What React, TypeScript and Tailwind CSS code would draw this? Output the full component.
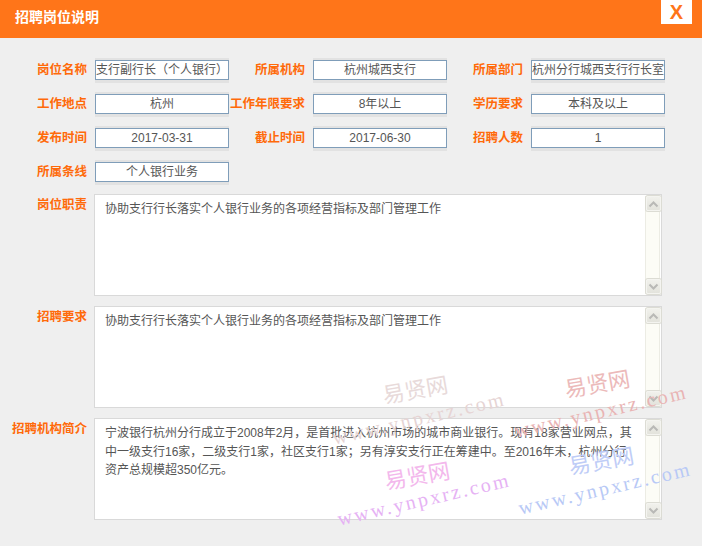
import React from 'react';

const FONT = { fontFamily: '"Liberation Sans", "Noto Sans CJK SC", sans-serif' };

const rows: [string, string][][] = [
  [
    ['岗位名称', '支行副行长（个人银行）'],
    ['所属机构', '杭州城西支行'],
    ['所属部门', '杭州分行城西支行行长室'],
  ],
  [
    ['工作地点', '杭州'],
    ['工作年限要求', '8年以上'],
    ['学历要求', '本科及以上'],
  ],
  [
    ['发布时间', '2017-03-31'],
    ['截止时间', '2017-06-30'],
    ['招聘人数', '1'],
  ],
  [['所属条线', '个人银行业务']],
];

// 水印位置（中心点）
const marks = [
  { x: 415, y: 388, cx: 419, cy: 418, c1: '#e8dada', c2: '#e6d4d4' },
  { x: 597, y: 382, cx: 601, cy: 411, c1: '#ecbaba', c2: '#e9b4b4' },
  { x: 417, y: 474, cx: 424, cy: 499, c1: '#f3b8ec', c2: '#e6b2f4' },
  { x: 601, y: 459, cx: 605, cy: 488, c1: '#bfcdf7', c2: '#b8c9f6' },
];

const Chevron = ({ up }: { up?: boolean }) => (
  <svg width="11" height="8" viewBox="0 0 11 8">
    <polyline
      points={up ? '1.5,6.5 5.5,2.5 9.5,6.5' : '1.5,1.5 5.5,5.5 9.5,1.5'}
      fill="none"
      stroke="#b9b9b6"
      strokeWidth="2"
    />
  </svg>
);

const ScrollBtn = ({ up }: { up?: boolean }) => (
  <div className="w-[15px] h-[15px] rounded-[2px] border border-[#f4f4f0] bg-gradient-to-b from-[#f1f1ec] to-[#e3e3dc] flex items-center justify-center shadow-[0_0_0_1px_#dcdcd4]">
    <Chevron up={up} />
  </div>
);

const TextBox = ({ label, children }: { label: string; children: React.ReactNode }) => (
  <div className="flex">
    <div className="w-[87px] pt-[3px] text-right text-[12.5px] leading-[16px] font-bold text-[#ff6a0a] whitespace-nowrap">
      {label}
    </div>
    <div className="ml-[7px] w-[568px] h-[102px] bg-white border border-[#d9d9d9] flex">
      <div className="flex-1 pl-[10px] pt-[5px] text-[12px] leading-[18.5px] text-[#555]">{children}</div>
      <div className="w-[15px] my-[1px] mr-[1px] bg-[#fcfcf6] border-x border-[#ecece4] flex flex-col justify-between">
        <ScrollBtn up />
        <ScrollBtn />
      </div>
    </div>
  </div>
);

export default function App() {
  return (
    <div className="relative w-full min-h-[546px] bg-[#efefef] overflow-hidden" style={FONT}>
      {/* 标题栏 */}
      <div className="h-[38px] bg-[#ff7519] flex items-start justify-between">
        <div className="pl-[15px] pt-[8px] text-[14px] leading-[18px] font-bold text-white">招聘岗位说明</div>
        <div className="mr-[10px] w-[31px] h-[24px] bg-white flex items-center justify-center text-[20px] font-bold text-[#ff7519] leading-none">
          X
        </div>
      </div>

      {/* 基本信息 */}
      <div className="pt-[22px] pl-[11px] flex flex-col gap-[14px]">
        {rows.map((row, i) => (
          <div key={i} className="flex">
            {row.map(([label, value]) => (
              <div key={label} className="flex items-center gap-[8px]">
                <div className="w-[76px] text-right text-[12.5px] font-bold text-[#ff6a0a] whitespace-nowrap flex justify-end">
                  {label}
                </div>
                <div className="w-[134px] h-[20px] bg-white border border-[#7f9db9] shadow-[0_-2px_0_#e2e2e2,0_3px_0_#e2e2e2] text-[12px] leading-[18px] text-[#555] text-center whitespace-nowrap overflow-hidden">
                  {value}
                </div>
              </div>
            ))}
          </div>
        ))}
      </div>

      {/* 文本区域 */}
      <div className="mt-[12px] flex flex-col gap-[10px]">
        <TextBox label="岗位职责">协助支行行长落实个人银行业务的各项经营指标及部门管理工作</TextBox>
        <TextBox label="招聘要求">协助支行行长落实个人银行业务的各项经营指标及部门管理工作</TextBox>
        <TextBox label="招聘机构简介">
          宁波银行杭州分行成立于2008年2月，是首批进入杭州市场的城市商业银行。现有18家营业网点，其
          <br />
          中一级支行16家，二级支行1家，社区支行1家；另有淳安支行正在筹建中。至2016年末，杭州分行
          <br />
          资产总规模超350亿元。
        </TextBox>
      </div>

      {/* 水印 */}
      {marks.map((m, i) => (
        <React.Fragment key={i}>
          <span
            className="pointer-events-none absolute -translate-x-1/2 -translate-y-1/2 rotate-[-10deg] text-[22px] leading-none whitespace-nowrap"
            style={{ left: m.x, top: m.y, color: m.c1, fontFamily: '"Noto Sans CJK SC", sans-serif' }}
          >
            易贤网
          </span>
          <span
            className="pointer-events-none absolute -translate-x-1/2 -translate-y-1/2 rotate-[-13deg] text-[20px] leading-none tracking-[2.5px] whitespace-nowrap"
            style={{ left: m.cx, top: m.cy, color: m.c2, fontFamily: '"Liberation Serif", serif' }}
          >
            www.ynpxrz.com
          </span>
        </React.Fragment>
      ))}
    </div>
  );
}
